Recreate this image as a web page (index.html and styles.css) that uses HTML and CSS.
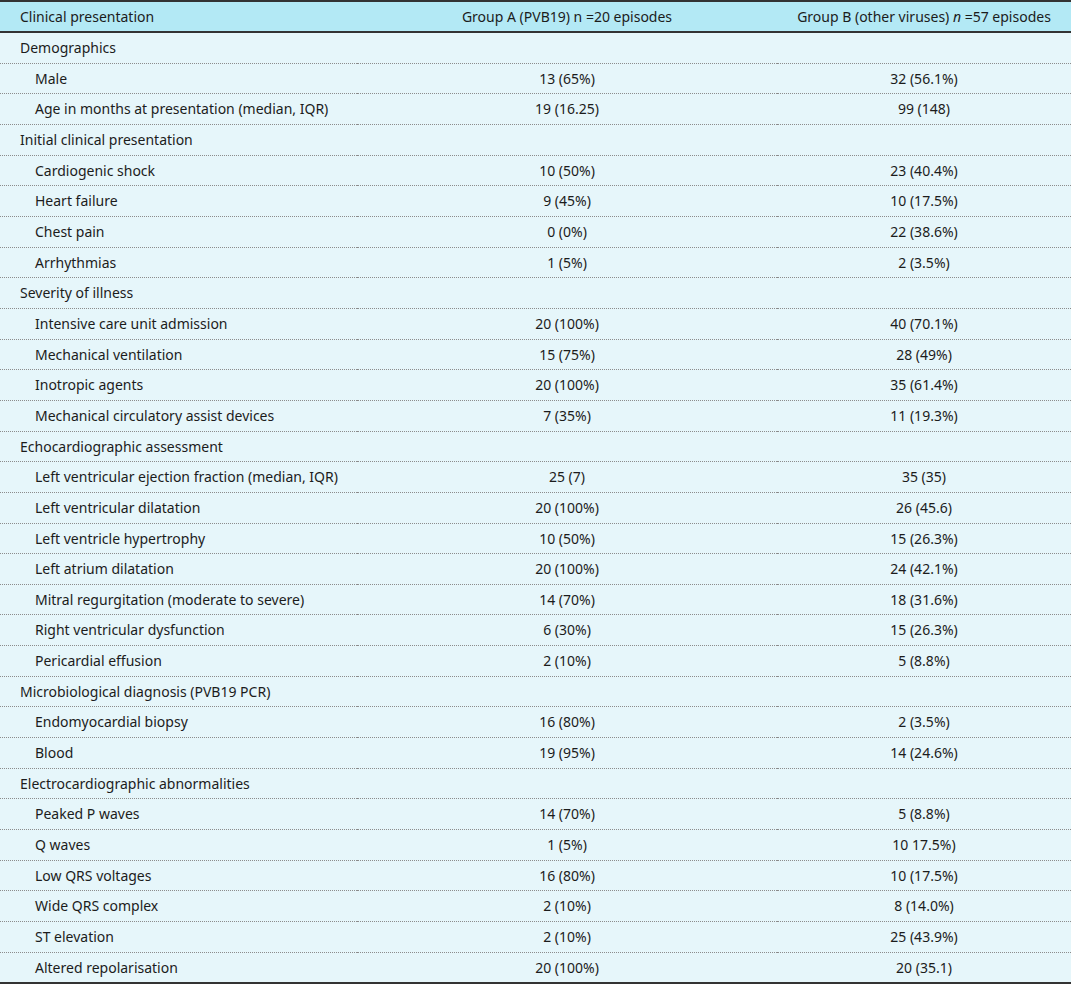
FILE: index.html
```html
<!DOCTYPE html>
<html>
<head>
<meta charset="utf-8">
<link rel="stylesheet" href="styles.css">
</head>
<body>
<table class="tbl">
  <colgroup><col class="c1"><col class="c2"><col class="c3"></colgroup>
  <thead>
    <tr><th class="lab">Clinical presentation</th><th>Group A (PVB19) n =20 episodes</th><th>Group B (other viruses) <i>n</i> =57 episodes</th></tr>
  </thead>
  <tbody>
    <tr class="sec"><td class="lab">Demographics</td><td></td><td></td></tr>
    <tr><td class="sub">Male</td><td>13 (65%)</td><td>32 (56.1%)</td></tr>
    <tr><td class="sub">Age in months at presentation (median, IQR)</td><td>19 (16.25)</td><td>99 (148)</td></tr>
    <tr class="sec"><td class="lab">Initial clinical presentation</td><td></td><td></td></tr>
    <tr><td class="sub">Cardiogenic shock</td><td>10 (50%)</td><td>23 (40.4%)</td></tr>
    <tr><td class="sub">Heart failure</td><td>9 (45%)</td><td>10 (17.5%)</td></tr>
    <tr><td class="sub">Chest pain</td><td>0 (0%)</td><td>22 (38.6%)</td></tr>
    <tr><td class="sub">Arrhythmias</td><td>1 (5%)</td><td>2 (3.5%)</td></tr>
    <tr class="sec"><td class="lab">Severity of illness</td><td></td><td></td></tr>
    <tr><td class="sub">Intensive care unit admission</td><td>20 (100%)</td><td>40 (70.1%)</td></tr>
    <tr><td class="sub">Mechanical ventilation</td><td>15 (75%)</td><td>28 (49%)</td></tr>
    <tr><td class="sub">Inotropic agents</td><td>20 (100%)</td><td>35 (61.4%)</td></tr>
    <tr><td class="sub">Mechanical circulatory assist devices</td><td>7 (35%)</td><td>11 (19.3%)</td></tr>
    <tr class="sec"><td class="lab">Echocardiographic assessment</td><td></td><td></td></tr>
    <tr><td class="sub">Left ventricular ejection fraction (median, IQR)</td><td>25 (7)</td><td>35 (35)</td></tr>
    <tr><td class="sub">Left ventricular dilatation</td><td>20 (100%)</td><td>26 (45.6)</td></tr>
    <tr><td class="sub">Left ventricle hypertrophy</td><td>10 (50%)</td><td>15 (26.3%)</td></tr>
    <tr><td class="sub">Left atrium dilatation</td><td>20 (100%)</td><td>24 (42.1%)</td></tr>
    <tr><td class="sub">Mitral regurgitation (moderate to severe)</td><td>14 (70%)</td><td>18 (31.6%)</td></tr>
    <tr><td class="sub">Right ventricular dysfunction</td><td>6 (30%)</td><td>15 (26.3%)</td></tr>
    <tr><td class="sub">Pericardial effusion</td><td>2 (10%)</td><td>5 (8.8%)</td></tr>
    <tr class="sec"><td class="lab">Microbiological diagnosis (PVB19 PCR)</td><td></td><td></td></tr>
    <tr><td class="sub">Endomyocardial biopsy</td><td>16 (80%)</td><td>2 (3.5%)</td></tr>
    <tr><td class="sub">Blood</td><td>19 (95%)</td><td>14 (24.6%)</td></tr>
    <tr class="sec"><td class="lab">Electrocardiographic abnormalities</td><td></td><td></td></tr>
    <tr><td class="sub">Peaked P waves</td><td>14 (70%)</td><td>5 (8.8%)</td></tr>
    <tr><td class="sub">Q waves</td><td>1 (5%)</td><td>10 17.5%)</td></tr>
    <tr><td class="sub">Low QRS voltages</td><td>16 (80%)</td><td>10 (17.5%)</td></tr>
    <tr><td class="sub">Wide QRS complex</td><td>2 (10%)</td><td>8 (14.0%)</td></tr>
    <tr><td class="sub">ST elevation</td><td>2 (10%)</td><td>25 (43.9%)</td></tr>
    <tr class="last"><td class="sub">Altered repolarisation</td><td>20 (100%)</td><td>20 (35.1)</td></tr>
  </tbody>
</table>
</body>
</html>
```

FILE: styles.css
```css
html, body {
  margin: 0;
  padding: 0;
  background: #ffffff;
}
.tbl {
  width: 1071px;
  border-collapse: separate;
  border-spacing: 0;
  table-layout: fixed;
  font-family: "Noto Sans", "Open Sans", sans-serif;
  font-size: 14px;
  color: #1c1c1c;
  background: #e6f6fa;
  border-top: 2px solid #333333;
  border-bottom: 2px solid #333333;
}
.c1 { width: 357px; }
.c2 { width: 420px; }
.c3 { width: 294px; }
.tbl th {
  background: #b3e9f5;
  font-weight: normal;
  text-align: center;
  height: 29px;
  padding: 0;
  border-bottom: 2px solid #333333;
  line-height: 29px;
}
.tbl th.lab {
  text-align: left;
  padding-left: 20px;
}
.tbl td {
  height: 29.66px;
  padding: 0;
  text-align: center;
  border-bottom: 1px dotted #8c8c8c;
  line-height: 29.66px;
  white-space: nowrap;
}
.tbl tr.last td {
  border-bottom: none;
}
.tbl td.lab {
  text-align: left;
  padding-left: 20px;
}
.tbl td.sub {
  text-align: left;
  padding-left: 35px;
}
```
